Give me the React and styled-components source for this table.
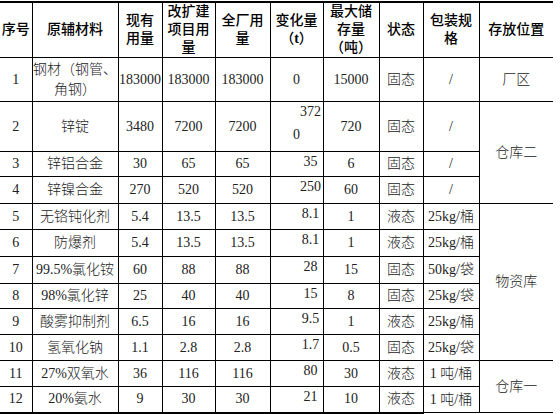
import React from "react";
import styled, { createGlobalStyle } from "styled-components";

const Global = createGlobalStyle`
  html, body { margin: 0; padding: 0; background: #fff; }
  body { width: 560px; height: 414px; overflow: hidden; }
`;

const Page = styled.div`
  padding-top: 1px;
  width: 560px;
`;

const Table = styled.table`
  border-collapse: collapse;
  table-layout: fixed;
  width: 553px;
  font-family: "Liberation Serif", "Noto Sans CJK SC", serif;
  font-size: 14px;
  color: #222;
`;

const Row = styled.tr`
  height: ${(p) => p.$h}px;
`;

const Head = styled.th`
  padding: 0;
  font-weight: 500;
  color: #000;
  line-height: 18px;
  text-align: center;
  vertical-align: middle;
  border-top: 2px solid #000;
  border-bottom: 1px solid #000;
  border-left: ${(p) => (p.$first ? "none" : "1px solid #000")};
  border-right: none;
  font-family: "Liberation Serif", "Noto Sans CJK SC", sans-serif;
  white-space: nowrap;
`;

const T = styled.b`
  font-family: "Liberation Serif", serif;
  font-weight: 700;
`;

const Cell = styled.td`
  padding: 0;
  line-height: 20px;
  text-align: center;
  vertical-align: ${(p) => (p.$top ? "top" : "middle")};
  white-space: nowrap;
  overflow: visible;
  border-top: 1px solid #000;
  border-bottom: ${(p) => (p.$last ? "2px solid #000" : "1px solid #000")};
  border-left: ${(p) => (p.$first ? "none" : "1px solid #000")};
  border-right: none;
  font-weight: 300;
`;

const Shift = styled.span`
  display: block;
  padding-left: 28px;
`;

const Line = styled.span`
  display: block;
  margin-top: ${(p) => p.$mt || 0}px;
`;

const heights = [44, 50, 25, 27, 26, 27, 27, 25, 26, 26, 26, 26];

const rows = [
  ["1", <>钢材（钢管、<br />角钢）</>, "183000", "183000", "183000", "0", "15000", "固态", "/"],
  ["2", "锌锭", "3480", "7200", "7200", "372|0", "720", "固态", "/"],
  ["3", "锌铝合金", "30", "65", "65", "35", "6", "固态", "/"],
  ["4", "锌镍合金", "270", "520", "520", "250", "60", "固态", "/"],
  ["5", "无铬钝化剂", "5.4", "13.5", "13.5", "8.1", "1", "液态", "25kg/桶"],
  ["6", "防爆剂", "5.4", "13.5", "13.5", "8.1", "1", "液态", "25kg/桶"],
  ["7", "99.5%氯化铵", "60", "88", "88", "28", "15", "固态", "50kg/袋"],
  ["8", "98%氯化锌", "25", "40", "40", "15", "8", "固态", "25kg/袋"],
  ["9", "酸雾抑制剂", "6.5", "16", "16", "9.5", "1", "液态", "25kg/桶"],
  ["10", "氢氧化钠", "1.1", "2.8", "2.8", "1.7", "0.5", "固态", "25kg/袋"],
  ["11", "27%双氧水", "36", "116", "116", "80", "30", "液态", "1 吨/桶"],
  ["12", "20%氨水", "9", "30", "30", "21", "10", "液态", "1 吨/桶"],
];

const places = {
  0: { text: "厂区", span: 1 },
  1: { text: "仓库二", span: 3 },
  4: { text: "物资库", span: 6 },
  10: { text: "仓库一", span: 2 },
};

const widths = [32, 86, 44, 53, 55, 53, 56, 44, 56, 74];

function Change({ value, index }) {
  if (index === 0) return value;
  if (value.includes("|")) {
    const [a, b] = value.split("|");
    return (
      <>
        <Shift>{a}</Shift>
        <Line $mt={3}>{b}</Line>
      </>
    );
  }
  return <Shift>{value}</Shift>;
}

export default function App() {
  const last = rows.length - 1;
  return (
    <Page>
      <Global />
      <Table>
        <colgroup>
          {widths.map((w, i) => (
            <col key={i} style={{ width: w }} />
          ))}
        </colgroup>
        <thead>
          <Row $h={54}>
            <Head $first>序号</Head>
            <Head>原辅材料</Head>
            <Head>现有<br />用量</Head>
            <Head>改扩建<br />项目用<br />量</Head>
            <Head>全厂用<br />量</Head>
            <Head>变化量<br />（<T>t</T>）</Head>
            <Head>最大储<br />存量<br />（吨）</Head>
            <Head>状态</Head>
            <Head>包装规<br />格</Head>
            <Head>存放位置</Head>
          </Row>
        </thead>
        <tbody>
          {rows.map((r, i) => {
            const isLast = i === last;
            const place = places[i];
            return (
              <Row key={i} $h={heights[i]}>
                <Cell $first $last={isLast}>{r[0]}</Cell>
                <Cell $last={isLast}>{r[1]}</Cell>
                <Cell $last={isLast}>{r[2]}</Cell>
                <Cell $last={isLast}>{r[3]}</Cell>
                <Cell $last={isLast}>{r[4]}</Cell>
                <Cell $last={isLast} $top={i !== 0}>
                  <Change value={r[5]} index={i} />
                </Cell>
                <Cell $last={isLast}>{r[6]}</Cell>
                <Cell $last={isLast}>{r[7]}</Cell>
                <Cell>{r[8]}</Cell>
                {place && <Cell rowSpan={place.span}>{place.text}</Cell>}
              </Row>
            );
          })}
        </tbody>
      </Table>
    </Page>
  );
}
